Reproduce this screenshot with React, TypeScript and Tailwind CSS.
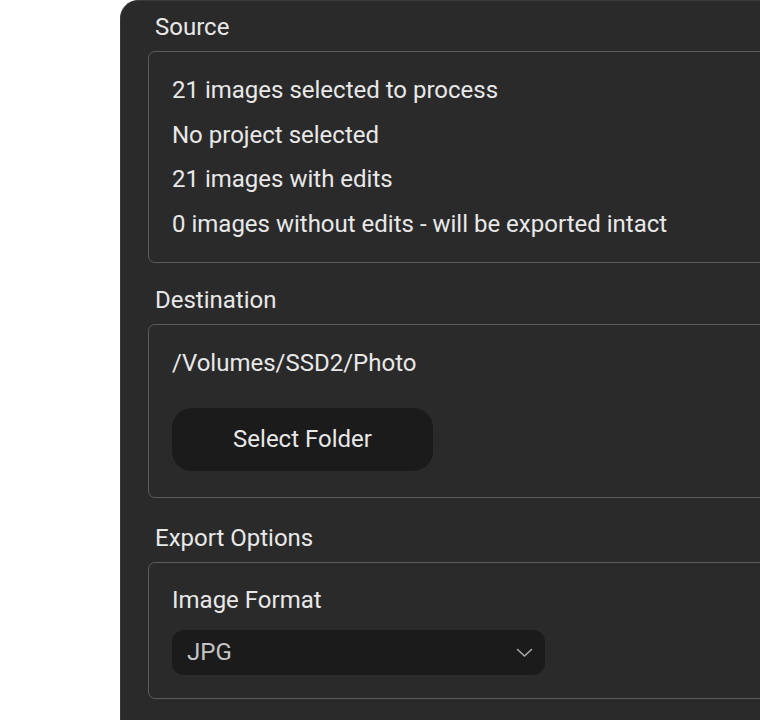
const sourceLines = [
  '21 images selected to process',
  'No project selected',
  '21 images with edits',
  '0 images without edits - will be exported intact',
]

function Section({ label, children, className = '', boxClass = 'pt-6' }: { label: string; children: React.ReactNode; className?: string; boxClass?: string }) {
  return (
    <div className={className}>
      <div className="pl-[7px] leading-[28px] mb-[10px]">{label}</div>
      <div className={`border border-[#5c5c5c] rounded-[7px] pl-[23px] pr-6 pb-6 ${boxClass}`}>{children}</div>
    </div>
  )
}

export default function App() {
  return (
    <div
      className="w-[760px] h-[720px] overflow-hidden bg-white text-[24px] text-[#e8e8e8]"
      style={{ fontFamily: 'Roboto, "Noto Sans", sans-serif' }}
    >
      <div className="ml-[120px] w-[720px] h-[760px] bg-[#2a2a2a] border border-[#3a3a3a] rounded-tl-[18px] pl-[27px] pt-[12px]">
        <Section label="Source">
          <div className="flex flex-col gap-[16.5px]">
            {sourceLines.map(l => (
              <div key={l} className="leading-[28px]">{l}</div>
            ))}
          </div>
        </Section>

        <Section label="Destination" className="mt-[23px]">
          <div className="leading-[28px]">/Volumes/SSD2/Photo</div>
          <button className="mt-[31px] mb-[2px] w-[261px] h-[63px] rounded-[20px] bg-[#1b1b1b] text-[#e8e8e8] leading-[28px]">
            Select Folder
          </button>
        </Section>

        <Section label="Export Options" className="mt-[26px]" boxClass="pt-[23px]">
          <div className="leading-[28px]">Image Format</div>
          <div className="mt-[16px] -mb-[1px] w-[373px] h-[45px] rounded-[12px] bg-[#1b1b1b] flex items-center justify-between pl-[15px] pr-[12px]">
            <span className="text-[#c4c4c4] leading-[28px]">JPG</span>
            <svg width="17" height="10" viewBox="0 0 17 10" fill="none" className="mt-[1px]">
              <path d="M1.5 1.5 L8.5 8 L15.5 1.5" stroke="#a8a8a8" strokeWidth="1.6" strokeLinecap="round" strokeLinejoin="round" />
            </svg>
          </div>
        </Section>
      </div>
    </div>
  )
}
